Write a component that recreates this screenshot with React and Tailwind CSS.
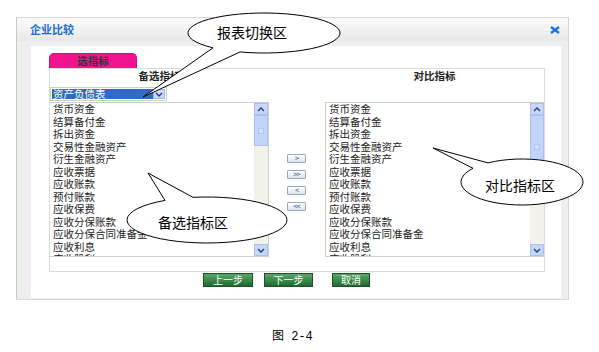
import React from "react";

const items = [
  "货币资金",
  "结算备付金",
  "拆出资金",
  "交易性金融资产",
  "衍生金融资产",
  "应收票据",
  "应收账款",
  "预付账款",
  "应收保费",
  "应收分保账款",
  "应收分保合同准备金",
  "应收利息",
  "应收股利",
];

const cjk = { fontFamily: '"Noto Sans CJK SC", "Liberation Sans", sans-serif' };

// speech bubble outline: ellipse with a wedge tail, one path
function bubble(cx, cy, rx, ry, x1, x2, top, tip) {
  const y = (x) => cy + (top ? -1 : 1) * ry * Math.sqrt(1 - ((x - cx) / rx) ** 2);
  const sweep = top ? 0 : 1;
  return `M${x1} ${y(x1)} A${rx} ${ry} 0 1 ${sweep} ${x2} ${y(x2)} L${tip[0]} ${tip[1]} Z`;
}

function Chevron({ up }) {
  return (
    <svg width="8" height="5" viewBox="0 0 8 5">
      <path
        d={up ? "M1 4 L4 1 L7 4" : "M1 1 L4 4 L7 1"}
        fill="none"
        stroke="#2b3f6b"
        strokeWidth="1.4"
      />
    </svg>
  );
}

function ListBox({ side, thumb }) {
  return (
    <div
      className={`flex h-[155px] w-[219px] border-[#cfcfcf] bg-white overflow-hidden ${
        side === "left" ? "border-t border-r border-b" : "border-t border-l border-b"
      }`}
    >
      <div className={`flex-1 overflow-hidden ${side === "left" ? "pl-[3px]" : "pl-[3px]"}`}>
        {items.map((t) => (
          <div
            key={t}
            className="h-[12.5px] leading-[12.5px] text-[10.5px] text-[#222] whitespace-nowrap"
          >
            {t}
          </div>
        ))}
      </div>
      <div className="w-[14px] flex flex-col bg-[#f3f2ea]">
        <div className="h-[12px] flex items-center justify-center bg-[#c6d7fa] border border-[#aac0ef]">
          <Chevron up />
        </div>
        <div className="flex-1 flex flex-col">
          <div
            className={`${thumb} flex items-center justify-center bg-[#c3d4fb] border border-[#a9c0f0]`}
          >
            <div className="w-[6px] h-[6px] border border-[#b2c6f2] bg-[#d3e0fc]" />
          </div>
        </div>
        <div className="h-[12px] flex items-center justify-center bg-[#c6d7fa] border border-[#aac0ef]">
          <Chevron />
        </div>
      </div>
    </div>
  );
}

function MoveBtn({ label }) {
  return (
    <div className="w-[19px] h-[9px] flex items-center justify-center rounded-[1px] border border-[#9aa9c2] bg-gradient-to-b from-[#ffffff] to-[#dde5f0] text-[7px] leading-none font-bold text-[#4a6aa0] tracking-[-1px]">
      {label}
    </div>
  );
}

function GreenBtn({ w, label }) {
  return (
    <div
      className={`${w} h-[14px] flex items-center justify-center border border-[#1b5125] bg-gradient-to-b from-[#5aa866] to-[#1e6a2f] text-white text-[10px] leading-none`}
    >
      {label}
    </div>
  );
}

export default function App() {
  return (
    <div className="relative w-[599px] h-[352px] bg-white overflow-hidden" style={cjk}>
      {/* dialog */}
      <div className="ml-[16px] pt-[17px]">
        <div className="w-[553px] h-[283px] flex flex-col border border-[#d6d6d6] border-l-[#b9d3b4] bg-[#eeeeee]">
          <div className="h-[23px] flex items-center justify-between pl-[13px] pr-[8px] bg-gradient-to-b from-[#fafafa] to-[#e8e8e8]">
            <span className="text-[11px] font-bold text-[#1f6fd1]">企业比较</span>
            <svg width="10" height="8" viewBox="0 0 10 8">
              <path d="M1 1 L9 7 M9 1 L1 7" stroke="#1a74e6" strokeWidth="2.4" />
            </svg>
          </div>

          <div className="mt-[5px] ml-[14px] w-[530px] h-[252px] bg-white pl-[18px] pt-[7px]">
            {/* tab */}
            <div className="w-[88px] h-[15px] rounded-t-[5px] bg-[#f2148f] border border-b-0 border-[#d60a7c] flex items-center justify-center text-[10.5px] font-bold text-[#333]">
              选指标
            </div>

            {/* box */}
            <div className="w-[496px] h-[204px] border border-[#dcdcdc] flex flex-col">
              <div className="h-[18px] flex pt-[1px] text-[10.5px] font-bold text-[#222] leading-[12px]">
                <div className="w-[219px] text-center">备选指标</div>
                <div className="w-[56px]" />
                <div className="w-[219px] text-center">对比指标</div>
              </div>
              <div className="h-[14px] flex">
                <div className="w-[117px] h-[14px] flex border border-[#bfdcb8] p-[1px]">
                  <div className="w-[101px] bg-[#3169c6] text-white text-[10.5px] leading-[10px] pl-[1px]">
                    资产负债表
                  </div>
                  <div className="flex-1 flex items-center justify-center bg-[#c6d7fa] border border-[#9fb7e8]">
                    <Chevron />
                  </div>
                </div>
              </div>
              <div className="mt-[1px] flex">
                <ListBox side="left" thumb="h-[31px]" />
                <div className="w-[56px] pl-[18px] pt-[52px] flex flex-col gap-[7px]">
                  <MoveBtn label=">" />
                  <MoveBtn label=">>" />
                  <MoveBtn label="<" />
                  <MoveBtn label="<<" />
                </div>
                <ListBox side="right" thumb="h-[64px]" />
              </div>
            </div>

            {/* footer buttons */}
            <div className="mt-[1px] pl-[154px] flex">
              <GreenBtn w="w-[50px]" label="上一步" />
              <div className="w-[11px]" />
              <GreenBtn w="w-[49px]" label="下一步" />
              <div className="w-[19px]" />
              <GreenBtn w="w-[38px]" label="取消" />
            </div>
          </div>
        </div>
      </div>

      {/* caption */}
      <div
        className="mt-[30px] pl-[272px] h-[14px] leading-[14px] text-[12px] text-black"
        style={{ fontFamily: '"Liberation Mono", "Noto Sans CJK SC", monospace' }}
      >
        图 2-4
      </div>

      {/* callouts */}
      <svg className="absolute left-0 top-0 pointer-events-none" width="599" height="352">
        <path
          d={bubble(264, 33, 76, 20, 213, 240, false, [143, 97])}
          fill="white"
          stroke="black"
          strokeWidth="1"
        />
        <path
          d={bubble(207, 220, 80, 23, 165, 193, true, [148, 173])}
          fill="white"
          stroke="black"
          strokeWidth="1"
        />
        <path
          d={bubble(522, 182, 61, 23, 473, 488, true, [433, 148])}
          fill="white"
          stroke="black"
          strokeWidth="1"
        />
      </svg>
      <div className="absolute left-[217px] top-[22px] text-[14px] leading-[20px] text-black">报表切换区</div>
      <div className="absolute left-[158px] top-[212px] text-[14px] leading-[20px] text-black">备选指标区</div>
      <div className="absolute left-[485px] top-[175px] text-[14px] leading-[20px] text-black">对比指标区</div>
    </div>
  );
}
